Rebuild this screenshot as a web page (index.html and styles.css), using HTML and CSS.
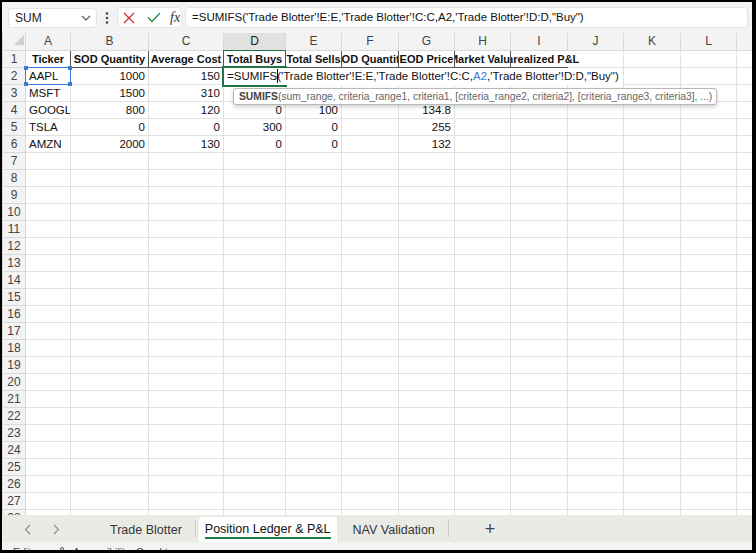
FILE: index.html
```html
<!DOCTYPE html>
<html lang="en">

<head>
    <meta charset="UTF-8">
    <meta name="viewport" content="width=device-width, initial-scale=1.0">
    <title>Position Ledger &amp; P&amp;L</title>
    <link rel="stylesheet" href="styles.css">
</head>

<body>

    <div class="app">

        <div class="formula-bar">
            <div class="name-box">
                <span>SUM</span>
                <svg width="10" height="6" viewBox="0 0 10 6"><polyline points="1,1 5,5 9,1" fill="none" stroke="#555" stroke-width="1.1" /></svg>
            </div>
            <div class="more-dots">
                <svg width="4" height="14" viewBox="0 0 4 14"><circle cx="2" cy="2.5" r="1.3" fill="#444" /><circle cx="2" cy="7" r="1.3" fill="#444" /><circle cx="2" cy="11.5" r="1.3" fill="#444" /></svg>
            </div>
            <div class="fx-box">
                <svg class="btn-cancel" width="12" height="12" viewBox="0 0 12 12"><path d="M1 1 L11 11 M11 1 L1 11" stroke="#d13438" stroke-width="1.4" fill="none" /></svg>
                <svg class="btn-enter" width="14" height="11" viewBox="0 0 14 11"><polyline points="1,5.5 5,9.5 13,1" fill="none" stroke="#2e8b46" stroke-width="1.4" /></svg>
                <span class="fx">fx</span>
            </div>
            <div class="formula-input">=SUMIFS('Trade Blotter'!E:E,'Trade Blotter'!C:C,A2,'Trade Blotter'!D:D,"Buy")</div>
        </div>

        <div class="grid-wrap">
            <table class="sheet">
                <colgroup>
                    <col style="width:23px">
                    <col style="width:45px">
                    <col style="width:78px">
                    <col style="width:75px">
                    <col style="width:62px">
                    <col style="width:56px">
                    <col style="width:57px">
                    <col style="width:56px">
                    <col style="width:56px">
                    <col style="width:57px">
                    <col style="width:56px">
                    <col style="width:57px">
                    <col style="width:56px">
                    <col style="width:16px">
                </colgroup>
                <thead>
                    <tr>
                        <th class="corner"><div class="corner-tri"></div></th>
                        <th>A</th>
                        <th>B</th>
                        <th>C</th>
                        <th class="sel">D</th>
                        <th>E</th>
                        <th>F</th>
                        <th>G</th>
                        <th>H</th>
                        <th>I</th>
                        <th>J</th>
                        <th>K</th>
                        <th>L</th>
                        <th></th>
                    </tr>
                </thead>
                <tbody id="sheet-body">
                    <tr>
                        <th class="row-hd">1</th>
                        <td class="hd-cell"><div class="clip"><span>Ticker</span></div></td>
                        <td class="hd-cell"><div class="clip"><span>SOD Quantity</span></div></td>
                        <td class="hd-cell"><div class="clip"><span>Average Cost</span></div></td>
                        <td class="hd-cell"><div class="clip"><span>Total Buys</span></div></td>
                        <td class="hd-cell"><div class="clip"><span>Total Sells</span></div></td>
                        <td class="hd-cell"><div class="clip"><span>EOD Quantity</span></div></td>
                        <td class="hd-cell"><div class="clip"><span>EOD Price</span></div></td>
                        <td class="hd-cell"><div class="clip"><span>Market Value</span></div></td>
                        <td class="hd-cell spill"><div class="clip"><span>Unrealized P&amp;L</span></div></td>
                        <td></td><td></td><td></td><td></td>
                    </tr>
                    <tr>
                        <th class="row-hd">2</th>
                        <td>AAPL</td><td class="num">1000</td><td class="num">150</td>
                        <td></td><td></td><td></td><td></td><td></td><td></td><td></td><td></td><td></td><td></td>
                    </tr>
                    <tr>
                        <th class="row-hd">3</th>
                        <td>MSFT</td><td class="num">1500</td><td class="num">310</td>
                        <td></td><td></td><td></td><td></td><td></td><td></td><td></td><td></td><td></td><td></td>
                    </tr>
                    <tr>
                        <th class="row-hd">4</th>
                        <td>GOOGL</td><td class="num">800</td><td class="num">120</td>
                        <td class="num">0</td><td class="num">100</td><td></td><td class="num">134.8</td>
                        <td></td><td></td><td></td><td></td><td></td><td></td>
                    </tr>
                    <tr>
                        <th class="row-hd">5</th>
                        <td>TSLA</td><td class="num">0</td><td class="num">0</td>
                        <td class="num">300</td><td class="num">0</td><td></td><td class="num">255</td>
                        <td></td><td></td><td></td><td></td><td></td><td></td>
                    </tr>
                    <tr>
                        <th class="row-hd">6</th>
                        <td>AMZN</td><td class="num">2000</td><td class="num">130</td>
                        <td class="num">0</td><td class="num">0</td><td></td><td class="num">132</td>
                        <td></td><td></td><td></td><td></td><td></td><td></td>
                    </tr>
                </tbody>
            </table>

            <!-- overlays: selection, edit text, reference box, tooltip -->
            <div class="hd-focus"></div>
            <div class="active-cell"></div>
            <div class="edit-text">=SUMIFS<span class="caret"></span>('Trade Blotter'!E:E,'Trade Blotter'!C:C,<span class="ref">A2</span>,'Trade Blotter'!D:D,"Buy")</div>
            <div class="ref-box">
                <span class="handle tl"></span><span class="handle tr"></span>
                <span class="handle bl"></span><span class="handle br"></span>
            </div>
            <div class="fn-tip"><b>SUMIFS</b>(sum_range, criteria_range1, criteria1, [criteria_range2, criteria2], [criteria_range3, criteria3], ...)</div>
        </div>

        <div class="tab-bar">
            <div class="tab-nav">
                <svg width="7" height="11" viewBox="0 0 7 11"><polyline points="6,1 1.5,5.5 6,10" fill="none" stroke="#8a8a8a" stroke-width="1.1" /></svg>
                <svg width="7" height="11" viewBox="0 0 7 11"><polyline points="1,1 5.5,5.5 1,10" fill="none" stroke="#8a8a8a" stroke-width="1.1" /></svg>
            </div>
            <div class="tab">Trade Blotter</div>
            <div class="tab-sep"></div>
            <div class="tab active"><span class="tab-label">Position Ledger &amp; P&amp;L</span></div>
            <div class="tab tab-nav-val">NAV Validation</div>
            <div class="tab-sep"></div>
            <div class="tab-add">+</div>
        </div>

        <div class="status-bar">
            <span>Edit</span>
            <svg class="acc-icon" width="10" height="10" viewBox="0 0 10 10"><circle cx="5" cy="2" r="1.5" fill="none" stroke="#555" /><path d="M1 4.5 H9 M5 4.5 V9" stroke="#555" fill="none" /></svg>
            <span>Accessibility: Good to go</span>
        </div>

    </div>

    <script>
        function fillEmptyRows() {
            const body = document.getElementById('sheet-body');
            let html = '';
            for (let r = 7; r <= 28; r++) {
                html += `<tr><th class="row-hd">${r}</th>` + '<td></td>'.repeat(13) + '</tr>';
            }
            body.insertAdjacentHTML('beforeend', html);
        }

        fillEmptyRows();
    </script>
</body>

</html>
```

FILE: styles.css
```css
* {
    box-sizing: border-box;
}

html,
body {
    margin: 0;
}

body {
    background: #000;
    width: 756px;
    height: 553px;
    padding: 2px 4px 3px 2px;
    overflow: hidden;
    font-family: "Liberation Sans", Arial, sans-serif;
}

.app {
    display: flex;
    flex-direction: column;
    height: 548px;
    background: #fff;
}

/* formula bar */
.formula-bar {
    flex: none;
    height: 31px;
    display: flex;
    align-items: center;
    padding: 0 4px 0 6px;
    background: #f3f3f3;
}

.name-box {
    width: 89px;
    height: 20px;
    display: flex;
    align-items: center;
    justify-content: space-between;
    padding: 0 5px 0 6px;
    background: #fff;
    border: 1px solid #e4e4e4;
    border-radius: 4px;
    font-size: 12px;
    color: #222;
}

.more-dots {
    width: 20px;
    display: flex;
    justify-content: center;
}

.fx-box {
    width: 65px;
    height: 21px;
    display: flex;
    align-items: center;
    padding-left: 5px;
    background: #fff;
    border: 1px solid #e4e4e4;
    border-radius: 4px;
}

.btn-enter {
    margin-left: 12px;
}

.fx {
    margin-left: 9px;
    font-family: "Liberation Serif", serif;
    font-style: italic;
    font-size: 14px;
    color: #333;
}

.formula-input {
    flex: 1;
    height: 21px;
    margin-left: 3px;
    padding-left: 6px;
    line-height: 19px;
    background: #fff;
    border: 1px solid #e4e4e4;
    border-radius: 4px;
    font-size: 11.5px;
    color: #111;
    white-space: nowrap;
    overflow: hidden;
}

/* grid */
.grid-wrap {
    position: relative;
    flex: none;
    height: 482px;
    overflow: hidden;
}

.sheet {
    width: 750px;
    table-layout: fixed;
    border-collapse: collapse;
    font-size: 11.5px;
    color: #111;
}

.sheet td {
    height: 17px;
    padding: 0 3px;
    border: 1px solid #e2e2e2;
    white-space: nowrap;
    overflow: hidden;
    line-height: 14px;
}

.sheet thead th {
    height: 17px;
    padding: 0;
    background: #f3f3f3;
    border: 1px solid #d9d9d9;
    border-top: none;
    font-weight: normal;
    font-size: 12px;
    color: #444;
}

.sheet thead th.sel {
    background: #e1e1e1;
    color: #222;
}

.sheet th.corner {
    text-align: right;
    vertical-align: bottom;
    padding: 0 1px 2px 0;
}

.corner-tri {
    display: inline-block;
    width: 0;
    height: 0;
    border-left: 10px solid transparent;
    border-bottom: 10px solid #cfcfcf;
}

.row-hd {
    padding: 0;
    background: #f3f3f3;
    border: 1px solid #d9d9d9;
    font-weight: normal;
    font-size: 12px;
    color: #444;
    text-align: center;
}

.num {
    text-align: right;
}

.hd-cell {
    padding: 0 !important;
    font-weight: bold;
    font-size: 11px;
    border-right-color: #555 !important;
    border-bottom-color: #555 !important;
}

.hd-cell .clip {
    display: flex;
    justify-content: center;
    overflow: hidden;
}

.hd-cell.spill {
    overflow: visible;
    border-right-color: transparent !important;
}

.hd-cell.spill .clip {
    overflow: visible;
    clip-path: inset(0 -100px 0 0);
}

/* overlays */
.hd-focus {
    position: absolute;
    left: 221px;
    top: 17px;
    width: 63px;
    height: 18px;
    border: 1px solid #217346;
}

.active-cell {
    position: absolute;
    left: 220px;
    top: 33px;
    width: 65px;
    height: 21px;
    border: 2px solid #217346;
}

.edit-text {
    position: absolute;
    left: 222px;
    top: 35px;
    width: 399px;
    height: 17px;
    padding-left: 3px;
    line-height: 17px;
    background: #fff;
    font-size: 11.5px;
    color: #111;
    white-space: nowrap;
}

.caret {
    display: inline-block;
    width: 1px;
    height: 14px;
    margin-right: -1px;
    background: #000;
    vertical-align: -3px;
}

.ref {
    color: #3b78d8;
}

.ref-box {
    position: absolute;
    left: 23px;
    top: 34px;
    width: 46px;
    height: 18px;
    border: 1px solid #3b78d8;
}

.handle {
    position: absolute;
    width: 4px;
    height: 4px;
    background: #3b78d8;
}

.handle.tl { left: -2px; top: -2px; }
.handle.tr { right: -2px; top: -2px; }
.handle.bl { left: -2px; bottom: -2px; }
.handle.br { right: -2px; bottom: -2px; }

.fn-tip {
    position: absolute;
    left: 231px;
    top: 55px;
    width: 484px;
    height: 17px;
    padding-left: 5px;
    line-height: 15px;
    background: #fff;
    border: 1px solid #b9b9b9;
    border-radius: 3px;
    box-shadow: 0 2px 4px rgba(0, 0, 0, 0.18);
    font-size: 10.3px;
    color: #666;
    white-space: nowrap;
}

.fn-tip b {
    color: #444;
}

/* sheet tabs */
.tab-bar {
    flex: none;
    height: 27px;
    display: flex;
    align-items: stretch;
    padding-top: 2px;
    background: #ebebe6;
    font-size: 12.5px;
    color: #333;
}

.tab-nav {
    width: 95px;
    display: flex;
    align-items: center;
    gap: 22px;
    padding-left: 22px;
}

.tab {
    display: flex;
    align-items: center;
    padding: 0 13px;
}

.tab-sep {
    width: 1px;
    height: 17px;
    align-self: center;
    margin-top: -2px;
    background: #c9c9c5;
}

.tab.active {
    margin-left: 3px;
    padding: 0 6px;
    background: #fff;
    border-radius: 3px 3px 0 0;
    color: #111;
}

.tab-label {
    line-height: 15px;
    padding-top: 2px;
    border-bottom: 2px solid #1e7b45;
}

.tab-nav-val {
    padding-left: 16px;
}

.tab-add {
    display: flex;
    align-items: center;
    margin-left: 36px;
    font-size: 18px;
    color: #444;
}

/* status bar */
.status-bar {
    flex: none;
    height: 8px;
    display: flex;
    align-items: flex-start;
    padding: 4px 0 0 11px;
    overflow: hidden;
    background: #f3f3f3;
    font-size: 10.5px;
    color: #444;
}

.acc-icon {
    margin-left: 26px;
    margin-right: 6px;
    margin-top: 1px;
}
```
